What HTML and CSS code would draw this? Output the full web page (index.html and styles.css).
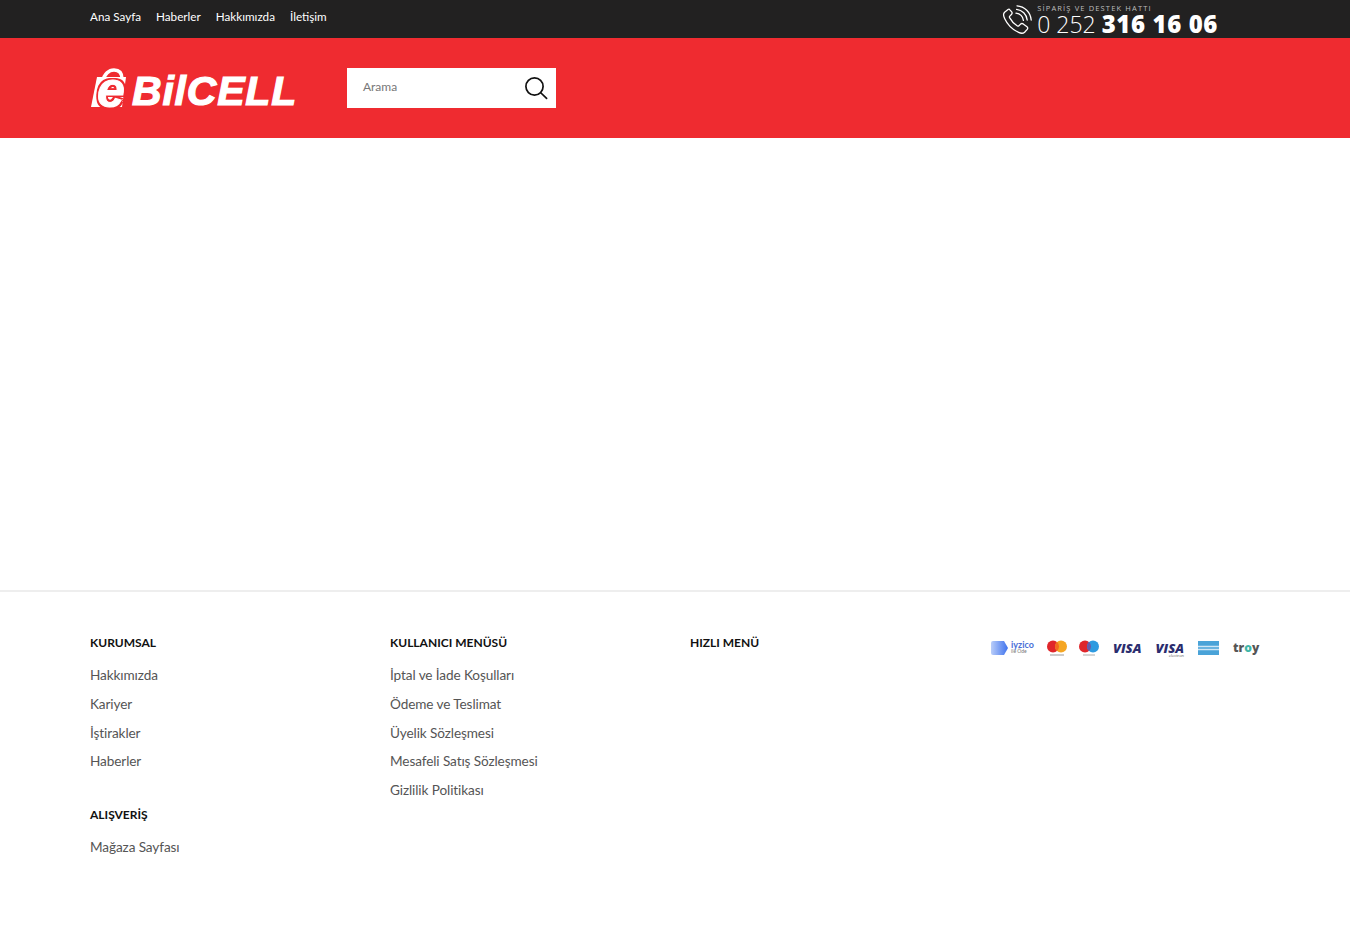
FILE: index.html
```html
<!DOCTYPE html>
<html lang="tr">
<head>
<meta charset="utf-8">
<title>eBilcell</title>
<link rel="stylesheet" href="styles.css">
</head>
<body>
<div class="topbar">
  <div class="topbar-inner">
    <nav class="topnav">
      <a>Ana Sayfa</a><a>Haberler</a><a>Hakkımızda</a><a>İletişim</a>
    </nav>
    <div class="hotline">
      <svg class="phone" viewBox="0 0 30 30" width="30" height="30" fill="none" stroke="#fff" stroke-width="1.3" stroke-linecap="round" stroke-linejoin="round">
        <path d="M6 4.500 2.600 7.200C1.200 8.600 1.400 11 2.600 13.400 5 18.600 10.600 24.600 16.600 27.400c2.400 1.100 4.400 1.200 6-.2l2.600-2.800c.8-.9.7-2-.2-2.700l-3.800-2.800c-.9-.6-1.800-.5-2.600.2l-1.700 1.700c-.4.4-1 .5-1.500.2-3-1.800-6.200-5.400-7.800-8.400-.3-.6-.2-1.100.2-1.500l1.600-1.600c.8-.8.9-1.800.3-2.600L7.900 4.800C7.300 4 6.700 4 6 4.500Z"/>
        <path d="M14 8.200c3.800.5 6.800 3.400 7.400 7.200"/>
        <path d="M14.600 4.400c5.600.6 10 5 10.600 10.600"/>
        <path d="M15 .8c7.600.5 13.600 6.600 14.200 14.200"/>
      </svg>
      <div class="hotline-text">
        <div class="hotline-label">SİPARİŞ VE DESTEK HATTI</div>
        <div class="hotline-number">0 252 <b>316 16 06</b></div>
      </div>
    </div>
  </div>
</div>

<header class="mainbar">
  <div class="mainbar-inner">
    <div class="logo">
      <span class="logo-e">
        <svg class="logo-bag" viewBox="0 0 38 40" width="38" height="40"><path d="M7 9h29l-4 30H1z" fill="#fff"/><path d="M13 13C14 6 19 2 24 2s8 3 8 9" fill="none" stroke="#fff" stroke-width="3.5"/></svg>
        <span class="logo-e-glyph">e</span>
      </span><span class="logo-word">BilCELL</span>
    </div>
    <div class="search">
      <span class="search-text">Arama</span>
      <svg viewBox="0 0 24 24" width="24" height="24" fill="none" stroke="#111" stroke-width="1.7" stroke-linecap="round"><circle cx="10.500" cy="10.500" r="8.600"/><path d="m17 17 5.600 5.400"/></svg>
    </div>
  </div>
</header>

<main class="content"></main>

<footer class="footer">
  <div class="footer-inner">
    <div class="fcol">
      <h4>KURUMSAL</h4>
      <ul>
        <li>Hakkımızda</li><li>Kariyer</li><li>İştirakler</li><li>Haberler</li>
      </ul>
      <h4 class="second">ALIŞVERİŞ</h4>
      <ul><li>Mağaza Sayfası</li></ul>
    </div>
    <div class="fcol">
      <h4>KULLANICI MENÜSÜ</h4>
      <ul>
        <li>İptal ve İade Koşulları</li><li>Ödeme ve Teslimat</li><li>Üyelik Sözleşmesi</li><li>Mesafeli Satış Sözleşmesi</li><li>Gizlilik Politikası</li>
      </ul>
    </div>
    <div class="fcol">
      <h4>HIZLI MENÜ</h4>
    </div>
    <div class="pay">
      <div class="iyzico">
        <svg viewBox="0 0 18 14" width="18" height="14"><defs><linearGradient id="iyz"><stop offset="0" stop-color="#b9cdf9"/><stop offset="1" stop-color="#3f73ee"/></linearGradient></defs><path d="M2 0h11l4 7-4 7H2a2 2 0 0 1-2-2V2a2 2 0 0 1 2-2Z" fill="url(#iyz)"/></svg>
        <div class="iyz-text"><span class="iyz-top">iyzico</span><span class="iyz-sub">ile Öde</span></div>
      </div>
      <svg viewBox="0 0 20 16" width="20" height="16"><circle cx="6" cy="6.500" r="6" fill="#e0262b"/><circle cx="14" cy="6.500" r="6" fill="#f5a623"/><path d="M10 2a6 6 0 0 1 0 9 6 6 0 0 1 0-9Z" fill="#f26a21"/><path d="M3 15h14" stroke="#999" stroke-width="1"/></svg>
      <svg viewBox="0 0 20 16" width="20" height="16"><circle cx="6" cy="6.500" r="6" fill="#e0262b"/><circle cx="14" cy="6.500" r="6" fill="#2d9ae0"/><path d="M10 2a6 6 0 0 1 0 9 6 6 0 0 1 0-9Z" fill="#6a5aa8"/><path d="M4 15h12" stroke="#aaa" stroke-width="1"/></svg>
      <span class="visa">VISA</span>
      <span class="visa electron">VISA<small>electron</small></span>
      <svg class="amex" viewBox="0 0 21 14" width="21" height="14"><rect width="21" height="14" fill="#4aa3d8"/><path d="M0 5.500h21M0 8.500h21" stroke="#cfe6f5" stroke-width="1.500"/></svg>
      <span class="troy">tr<i>o</i>y</span>
    </div>
  </div>
</footer>
</body>
</html>
```
FILE: styles.css
```css
* { box-sizing: border-box; }
html, body { margin: 0; padding: 0; }
body { background: #fff; font-family: "Lato", "Noto Sans", sans-serif; width: 1350px; height: 940px; overflow: hidden; }
h4, ul { margin: 0; padding: 0; }
ul { list-style: none; }

.topbar { background: #222121; height: 38px; padding: 0 90px; }
.topbar-inner { display: flex; justify-content: space-between; height: 38px; padding-right: 42px; }
.topnav { display: flex; gap: 15px; padding-top: 8px; font-size: 11.7px; line-height: 17px; color: #fff; }
.hotline { display: flex; align-items: flex-start; gap: 5px; padding-top: 4px; color: #fff; }
.phone { margin-top: 1px; }
.hotline-text { display: flex; flex-direction: column; }
.hotline-label { font-family: "Open Sans", sans-serif; font-size: 7.5px; letter-spacing: 1.15px; line-height: 9px; color: #bdbdbd; white-space: nowrap; }
.hotline-number { font-family: "Open Sans", sans-serif; font-size: 23px; line-height: 22px; font-weight: 300; white-space: nowrap; }
.hotline-number b { font-size: 24px; font-weight: 800; letter-spacing: .6px; }

.mainbar { background: #ef2b30; height: 100px; padding: 0 90px; }
.mainbar-inner { display: flex; align-items: center; height: 100px; }
.logo { display: flex; align-items: flex-end; width: 257px; height: 40px; color: #fff; font-family: "Liberation Sans", sans-serif; font-weight: 700; font-style: italic; }
.logo-e { position: relative; display: block; flex: none; width: 38px; height: 40px; }
.logo-bag { position: absolute; left: 0; top: 0; }
.logo-e-glyph { position: absolute; left: 7px; top: 3px; font-size: 50px; line-height: 38px; -webkit-text-stroke: 1px #fff; text-shadow: 2px 0 #ef2b30, -2px 0 #ef2b30, 0 2px #ef2b30, 0 -2px #ef2b30, 2px 2px #ef2b30, -2px -2px #ef2b30, 2px -2px #ef2b30, -2px 2px #ef2b30; }
.logo-word { margin-left: 4px; margin-bottom: -3px; font-size: 41px; line-height: 40px; letter-spacing: .8px; white-space: nowrap; -webkit-text-stroke: 1.2px #fff; }
.search { display: flex; align-items: center; justify-content: space-between; width: 209px; height: 40px; background: #fff; padding: 0 8px 0 16px; }
.search-text { font-size: 12px; line-height: 14px; margin-top: -2px; color: #777; }

.content { height: 454px; border-bottom: 2px solid #eee; }

.footer { padding: 42px 90px 0; }
.footer-inner { display: flex; }
.fcol { width: 300px; flex: none; }
.fcol h4 { font-size: 12px; line-height: 18px; font-weight: 700; color: #111; margin-bottom: 13px; }
.fcol h4.second { margin-top: 35px; }
.fcol li { font-size: 13.6px; line-height: 20px; letter-spacing: -.1px; color: #555; font-weight: 400; margin-bottom: 8.75px; white-space: nowrap; }

.pay { display: flex; align-items: center; gap: 12px; height: 16px; margin-top: 6px; margin-left: 1px; }
.iyzico { display: flex; align-items: center; gap: 2px; width: 44px; }
.iyz-text { display: flex; flex-direction: column; line-height: 7px; }
.iyz-top { font-size: 9px; font-weight: 700; color: #4a6fd8; }
.iyz-sub { font-size: 5px; color: #777; }
.visa { position: relative; margin-left: 2px; font-family: "Open Sans", sans-serif; font-style: italic; font-weight: 800; font-size: 13px; line-height: 16px; color: #2b2d6e; }
.visa small { position: absolute; right: 0; top: 13px; font-size: 4px; line-height: 5px; font-style: normal; font-weight: 400; color: #555; }
.amex { margin-left: 2px; }
.troy { margin-left: 2px; font-family: "Open Sans", sans-serif; font-weight: 800; font-size: 12px; line-height: 16px; color: #555; }
.troy i { font-style: normal; color: #3fb6a8; }
```
